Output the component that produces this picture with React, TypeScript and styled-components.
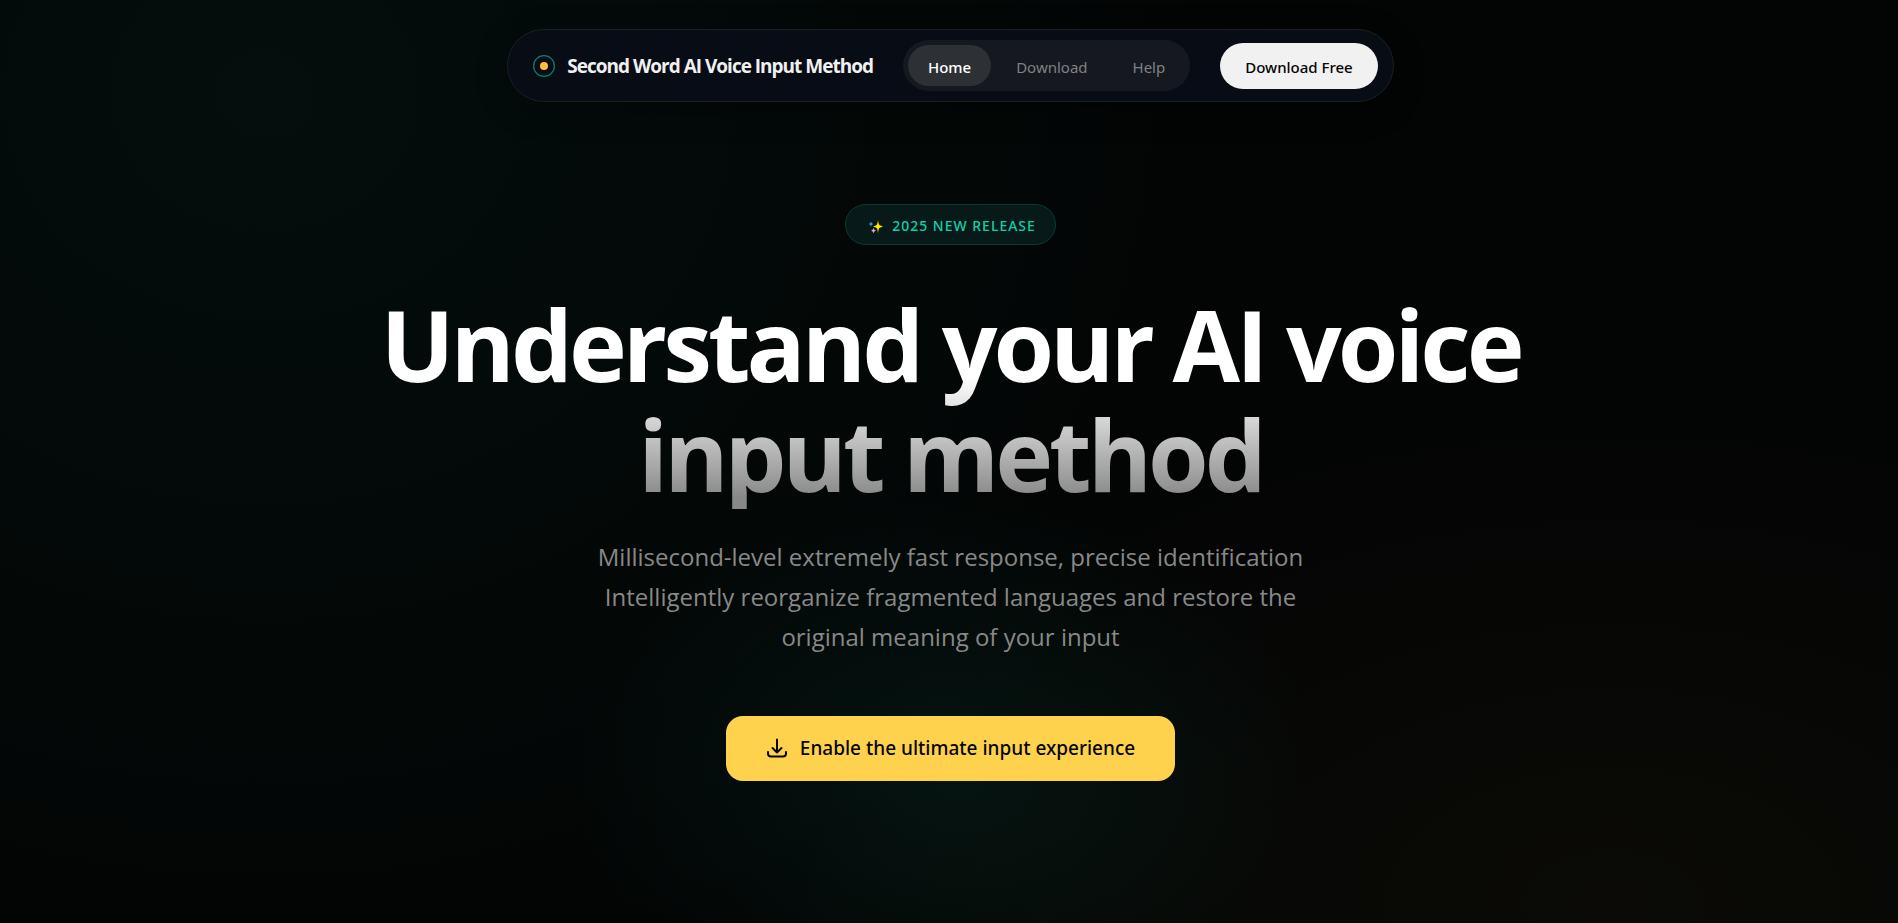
import React from 'react';
import styled, { createGlobalStyle } from 'styled-components';

const fontStack = '"Open Sans", "Noto Sans", sans-serif';
const labelStack = '"Noto Sans", "Open Sans", sans-serif';

const GlobalStyle = createGlobalStyle`
  *, *::before, *::after { box-sizing: border-box; }
  body {
    margin: 0;
    background: #030404;
    color: #fff;
    font-family: ${fontStack};
  }
`;

const Page = styled.div`
  display: flex;
  flex-direction: column;
  align-items: center;
  min-height: 100vh;
  padding: 29px 21px 120px 24px;
  background:
    radial-gradient(ellipse 20% 30% at 50% 84%, rgba(16, 200, 165, 0.08), transparent),
    radial-gradient(ellipse 55% 100% at 14% 10%, rgba(16, 200, 165, 0.05), transparent),
    radial-gradient(ellipse 45% 55% at 85% 98%, rgba(255, 200, 78, 0.03), transparent),
    #030404;
`;

const NavBar = styled.header`
  display: flex;
  align-items: center;
  gap: 30px;
  padding: 10px 15px 10px 25px;
  border: 1px solid #1b2023;
  border-radius: 37px;
  background: #080c14;
  box-shadow: 0 8px 32px rgba(0, 0, 0, 0.3);
`;

const Brand = styled.a`
  display: flex;
  align-items: center;
  gap: 12px;
  color: #f0f0f0;
  font-size: 19px;
  line-height: 24px;
  font-weight: 700;
  letter-spacing: -1px;
  text-decoration: none;
`;

const LinkGroup = styled.nav`
  display: flex;
  gap: 5px;
  padding: 5px;
  border-radius: 26px;
  background: #15181e;
`;

const NavLink = styled.a<{ $active?: boolean }>`
  padding: 12px 20px 8px;
  border-radius: 21px;
  background: ${({ $active }) => ($active ? '#2d3035' : 'transparent')};
  color: ${({ $active }) => ($active ? '#fff' : '#808184')};
  font-family: ${labelStack};
  font-size: 15px;
  line-height: 21px;
  font-weight: ${({ $active }) => ($active ? 500 : 400)};
  text-decoration: none;
`;

const PillButton = styled.button`
  padding: 13px 25px 11px;
  border: 0;
  border-radius: 23px;
  background: #f1f1f1;
  color: #050505;
  font: 500 15px/22px ${labelStack};
  cursor: pointer;
`;

const Hero = styled.main`
  display: flex;
  flex-direction: column;
  align-items: center;
  margin-top: 102px;
  text-align: center;
`;

const Badge = styled.div`
  display: flex;
  align-items: center;
  gap: 8px;
  padding: 11px 19px 8px 22px;
  border: 1px solid #0b3a33;
  border-radius: 21px;
  background: #071a19;
  color: #12cfa9;
  font-family: ${labelStack};
  font-size: 14px;
  line-height: 20px;
  font-weight: 500;
  letter-spacing: 1px;
`;

const Title = styled.h1`
  max-width: 1200px;
  margin: 44px 0 0;
  background: linear-gradient(180deg, #fff 40%, #888 95%);
  background-clip: text;
  -webkit-background-clip: text;
  color: transparent;
  font-size: 98px;
  line-height: 110px;
  font-weight: 700;
  letter-spacing: -4px;
`;

const Lead = styled.p`
  max-width: 720px;
  margin: 28px 0 0;
  color: #888;
  font-size: 24px;
  line-height: 40px;
`;

const PrimaryButton = styled.button`
  display: flex;
  align-items: center;
  gap: 12px;
  margin-top: 59px;
  padding: 20px 40px;
  border: 0;
  border-radius: 17px;
  background: #ffd24d;
  color: #050505;
  font: 500 19px/25px ${labelStack};
  cursor: pointer;
`;

const LogoMark = () => (
  <svg width="22" height="22" viewBox="0 0 22 22" fill="none" aria-hidden="true">
    <circle cx="11" cy="11" r="10.4" stroke="#0e8068" strokeWidth="1.2" />
    <circle cx="11" cy="11" r="4" fill="#fcc232" />
  </svg>
);

const Sparkles = () => (
  <svg width="16" height="16" viewBox="0 0 16 16" aria-hidden="true">
    <path d="M10 1 11.3 6.7 15.8 8.500 11.3 10.3 10 16 8.700 10.3 4.500 8.500 8.700 6.700Z" fill="#fff100" stroke="#000" strokeWidth="0.6" />
    <path d="M3 3.4 3.8 5.2 5.4 6 3.8 6.8 3 8.6 2.2 6.8.6 6 2.2 5.2Z" fill="#3a9ed0" />
    <path d="M5.5 10 6.3 11.8 7.9 12.6 6.3 13.4 5.5 15.2 4.7 13.4 3.1 12.6 4.7 11.8Z" fill="#f4a6c6" />
  </svg>
);

const DownloadIcon = () => (
  <svg width="22" height="22" viewBox="0 0 22 22" fill="none" stroke="#050505" strokeWidth="2" strokeLinecap="round" strokeLinejoin="round" aria-hidden="true">
    <path d="M11 1.500v13M6.500 10 11 14.500 15.500 10M2 14v1.500a3 3 0 0 0 3 3h12a3 3 0 0 0 3-3V14" />
  </svg>
);

const links = ['Home', 'Download', 'Help'];

export default function App() {
  return (
    <>
      <GlobalStyle />
      <Page>
        <NavBar>
          <Brand href="#">
            <LogoMark />
            Second Word AI Voice Input Method
          </Brand>
          <LinkGroup>
            {links.map((label, index) => (
              <NavLink key={label} href={`#${label.toLowerCase()}`} $active={index === 0}>
                {label}
              </NavLink>
            ))}
          </LinkGroup>
          <PillButton type="button">Download Free</PillButton>
        </NavBar>
        <Hero>
          <Badge>
            <Sparkles />
            2025 NEW RELEASE
          </Badge>
          <Title>Understand your AI voice input method</Title>
          <Lead>
            Millisecond-level extremely fast response, precise identification
            <br />
            Intelligently reorganize fragmented languages and restore the original meaning of your input
          </Lead>
          <PrimaryButton type="button">
            <DownloadIcon />
            Enable the ultimate input experience
          </PrimaryButton>
        </Hero>
      </Page>
    </>
  );
}
